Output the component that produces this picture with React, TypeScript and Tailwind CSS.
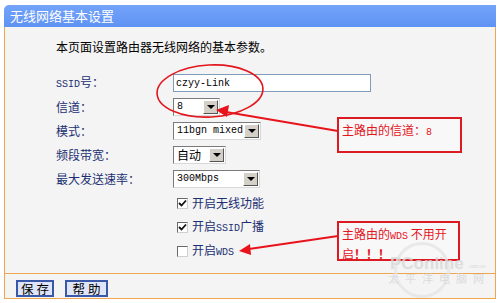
import React from "react";

const CJK = '"SimSun","Noto Sans CJK SC","Noto Sans",sans-serif';
const MONO = '"Liberation Mono","Noto Sans CJK SC",monospace';

function Lat({ children }: { children: React.ReactNode }) {
  return (
    <span className="text-[10px]" style={{ fontFamily: MONO }}>
      {children}
    </span>
  );
}

function Select({ w, value }: { w: string; value: React.ReactNode }) {
  return (
    <div
      className={`${w} h-[18px] flex items-stretch bg-white border border-t-[#7a7a7a] border-l-[#7a7a7a] border-r-[#d8d8d8] border-b-[#d8d8d8] p-[1px]`}
    >
      <div className="flex-1 flex items-center pl-[2px] text-[12px] text-black leading-[14px] whitespace-nowrap">
        {value}
      </div>
      <div className="w-[15px] bg-[#d4d0c8] border border-t-white border-l-white border-r-[#555] border-b-[#555] flex items-center justify-center">
        <div className="w-0 h-0 border-l-[4px] border-r-[4px] border-t-[4px] border-l-transparent border-r-transparent border-t-black" />
      </div>
    </div>
  );
}

function Row({ label, children }: { label?: React.ReactNode; children: React.ReactNode }) {
  return (
    <div className="h-[24px] flex items-center">
      <div className="w-[117px] text-[12px] text-[#1b2f72] leading-[14px]">{label}</div>
      <div className="flex items-center">{children}</div>
    </div>
  );
}

function Check({ checked, children }: { checked: boolean; children: React.ReactNode }) {
  return (
    <div className="flex items-center pl-[4px]">
      <div className="w-[11px] h-[11px] bg-white border border-t-[#6a6a6a] border-l-[#6a6a6a] border-r-[#cfcfcf] border-b-[#cfcfcf] flex items-center justify-center">
        {checked && (
          <svg width="9" height="9" viewBox="0 0 9 9">
            <path d="M1 4 L3.5 6.5 L8 1.5" stroke="#111" strokeWidth="1.8" fill="none" />
          </svg>
        )}
      </div>
      <span className="ml-[4px] text-[12px] text-[#1b2f72] leading-[14px]">{children}</span>
    </div>
  );
}

function Btn({ w, children }: { w: string; children: React.ReactNode }) {
  return (
    <div className={`${w} h-[17px] flex items-center justify-center bg-[#dfe5f8] border-2 border-[#3a58a8] text-[12.5px] text-black leading-[14px] whitespace-pre`}>
      {children}
    </div>
  );
}

export default function App() {
  return (
    <div
      className="relative w-[500px] h-[303px] bg-white overflow-hidden pt-[5px] pl-[4px]"
      style={{ fontFamily: CJK }}
    >
      <div className="w-[492px]">
        <div className="h-[22px] rounded-tl-[5px] bg-gradient-to-b from-[#74a4fa] to-[#5e92f3] flex items-center pl-[6px] text-white text-[13px]">
          无线网络基本设置
        </div>
        <div className="h-[246px] bg-[#f4f4f4] border-l border-r border-[#eea650] pl-[51px] pt-[12px]">
          <div className="h-[16px] text-[12px] text-black leading-[16px]">
            本页面设置路由器无线网络的基本参数。
          </div>
          <div className="mt-[16px]">
            <Row label={<><Lat>SSID</Lat>号：</>}>
              <div className="w-[198px] h-[18px] bg-white border border-[#7f9db9] flex items-center pl-[2px] text-black">
                <Lat>czyy-Link</Lat>
              </div>
            </Row>
            <Row label="信道：">
              <Select w="w-[47px]" value={<Lat>8</Lat>} />
            </Row>
            <Row label="模式：">
              <Select w="w-[88px]" value={<Lat>11bgn mixed</Lat>} />
            </Row>
            <Row label="频段带宽：">
              <Select w="w-[53px]" value="自动" />
            </Row>
            <Row label="最大发送速率：">
              <Select w="w-[87px]" value={<Lat>300Mbps</Lat>} />
            </Row>
            <Row>
              <Check checked>开启无线功能</Check>
            </Row>
            <Row>
              <Check checked>
                开启<Lat>SSID</Lat>广播
              </Check>
            </Row>
            <Row>
              <Check checked={false}>
                开启<Lat>WDS</Lat>
              </Check>
            </Row>
          </div>
        </div>
        <div className="h-[26px] bg-[#f4f4f4] border border-[#eea650] flex items-start pt-[6px] pl-[11px] gap-[11px]">
          <Btn w="w-[38px]">{"保 存"}</Btn>
          <Btn w="w-[43px]">{"帮 助"}</Btn>
        </div>
      </div>

      {/* red annotations */}
      <svg className="absolute left-0 top-0 pointer-events-none" width="500" height="303" viewBox="0 0 500 303">
        <ellipse cx="210" cy="91" rx="53" ry="26" fill="none" stroke="#e3161e" strokeWidth="1.6" transform="rotate(-3 210 91)" />
        <line x1="338" y1="131" x2="226" y2="112" stroke="#e8141c" strokeWidth="2" />
        <polygon points="216,110 229,105 227,117" fill="#e8141c" />
        <line x1="338" y1="236" x2="249" y2="249" stroke="#e8141c" strokeWidth="2" />
        <polygon points="239,251 250,244 251,255" fill="#e8141c" />
      </svg>

      <div className="absolute left-[337px] top-[117px] w-[125px] h-[36px] border-2 border-[#dc1a22] bg-[#f8f8f8] pl-[3px] pt-[3px] text-[12px] text-[#e3161e] leading-[16px]">
        主路由的信道：<Lat>8</Lat>
      </div>
      <div className="absolute left-[337px] top-[221px] w-[123px] h-[40px] border-2 border-[#dc1a22] bg-[#f8f8f8] pl-[3px] pt-[2px] text-[12px] text-[#e3161e] leading-[17px]">
        主路由的<Lat>WDS</Lat> 不用开
        <br />
        启<span className="font-bold">！！！</span>
      </div>

      {/* watermark (over everything, faint) */}
      <div className="absolute left-[388px] top-[240px] w-[108px] h-[60px] pointer-events-none select-none opacity-80">
        <div className="absolute left-[6px] top-[2px] w-[56px] h-[56px] rounded-full border-[3px] border-[#e6e6e6]" />
        <div className="absolute left-[2px] top-[15px] text-[17px] font-bold text-[#d8d8d8] leading-none" style={{ fontFamily: '"Liberation Sans",sans-serif' }}>
          PConline
        </div>
        <div className="absolute left-[80px] top-[24px] text-[5px] text-[#d2d2d2] leading-none" style={{ fontFamily: '"Liberation Sans",sans-serif' }}>
          .com.cn
        </div>
        <div className="absolute left-[0px] top-[33px] text-[11px] text-[#d6d6d6] leading-none tracking-[6px]">
          太平洋电脑网
        </div>
      </div>
    </div>
  );
}
